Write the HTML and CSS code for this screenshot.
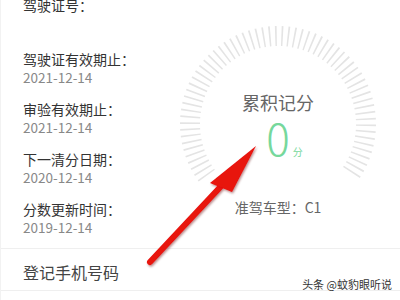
FILE: index.html
```html
<!DOCTYPE html>
<html lang="zh-CN">
<head>
<meta charset="utf-8">
<link rel="stylesheet" href="styles.css">
</head>
<body>
<div class="page">
  <div class="main">
    <div class="info">
      <div class="item">
        <div class="label">驾驶证号：</div>
        <div class="value empty"></div>
      </div>
      <div class="item">
        <div class="label">驾驶证有效期止：</div>
        <div class="value">2021-12-14</div>
      </div>
      <div class="item">
        <div class="label">审验有效期止：</div>
        <div class="value">2021-12-14</div>
      </div>
      <div class="item">
        <div class="label">下一清分日期：</div>
        <div class="value">2020-12-14</div>
      </div>
      <div class="item last">
        <div class="label">分数更新时间：</div>
        <div class="value">2019-12-14</div>
      </div>
    </div>
    <div class="gauge-col">
      <div class="gauge">
        <svg class="ticks" width="196" height="196" viewBox="0 0 196 196">
          <path d="M26.81 149.72 A88 88 0 1 1 169.19 149.72" fill="none" stroke="#e4e4e4" stroke-width="20" stroke-dasharray="1.6 4.543"/>
        </svg>
        <div class="g-title">累积记分</div>
        <div class="g-score">0<span class="unit">分</span></div>
        <div class="g-type">准驾车型：C1</div>
      </div>
    </div>
  </div>
  <div class="row">登记手机号码</div>
  <div class="watermark">头条 @蚊豹眼听说</div>
  <svg class="arrow" width="400" height="300" viewBox="0 0 400 300">
    <defs>
      <filter id="sh" x="-20%" y="-20%" width="140%" height="140%">
        <feDropShadow dx="1" dy="1.5" stdDeviation="1.2" flood-color="#600" flood-opacity="0.45"/>
      </filter>
    </defs>
    <g filter="url(#sh)">
      <line x1="149" y1="262" x2="224" y2="182" stroke="#e8120f" stroke-width="6" stroke-linecap="round"/>
      <polygon points="255,146 209,183 231,192" fill="#e8120f"/>
    </g>
  </svg>
</div>
</body>
</html>
```

FILE: styles.css
```css
* { box-sizing: border-box; }
html, body { margin: 0; padding: 0; background: #fff; }
body {
  width: 400px;
  height: 300px;
  overflow: hidden;
  font-family: "Noto Sans CJK SC", "Noto Sans", sans-serif;
  color: #333;
}
.page {
  position: relative;
  width: 400px;
  height: 300px;
  border-left: 1px solid #f2f2f2;
}
.main {
  display: flex;
  align-items: flex-start;
}
.info {
  width: 155px;
  padding-left: 22px;
  margin-top: -4px;
}
.item { margin-bottom: 14px; }
.item.last { margin-bottom: 12px; }
.label {
  font-size: 14px;
  line-height: 18px;
  color: #333;
  white-space: nowrap;
}
.value {
  font-size: 13.5px;
  line-height: 18px;
  color: #888;
}
.value.empty { height: 22px; }
.gauge-col {
  flex: 1;
  display: flex;
  justify-content: center;
  padding-top: 26px;
}
.gauge {
  position: relative;
  width: 196px;
  height: 196px;
  display: flex;
  flex-direction: column;
  align-items: center;
  padding-top: 64px;
}
.ticks {
  position: absolute;
  left: 0;
  top: 0;
}
.g-title {
  position: relative;
  font-size: 18px;
  line-height: 24px;
  color: #666;
}
.g-score {
  position: relative;
  margin-top: 1px;
  font-size: 44px;
  line-height: 44px;
  height: 44px;
  font-weight: 300;
  color: #76d89c;
  white-space: nowrap;
}
.unit {
  font-size: 10px;
  line-height: 10px;
  margin-left: 3px;
  margin-right: -13px;
  font-weight: 400;
}
.g-type {
  position: relative;
  margin-top: 38px;
  font-size: 14px;
  line-height: 20px;
  color: #666;
  white-space: nowrap;
}
.row {
  border-top: 1px solid #efefef;
  border-bottom: 1px solid #efefef;
  padding: 12px 22px 7px;
  font-size: 16px;
  line-height: 22px;
  color: #444;
}
.watermark {
  position: absolute;
  right: 8px;
  top: 277px;
  font-size: 11px;
  line-height: 14px;
  color: #333;
  text-shadow: 0 0 2px #fff;
}
.arrow {
  position: absolute;
  left: 0;
  top: 0;
  pointer-events: none;
}
```
